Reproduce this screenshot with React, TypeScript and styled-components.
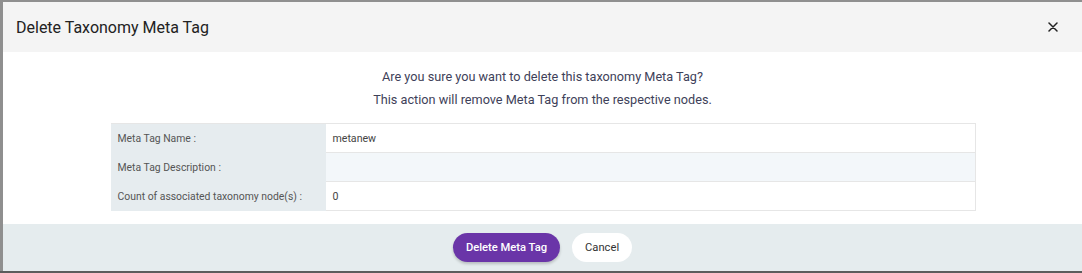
import React from "react";
import styled, { createGlobalStyle } from "styled-components";

const Global = createGlobalStyle`
  html, body { margin: 0; padding: 0; overflow: hidden; }
  body { background: #8f8f8f; font-family: Roboto, "Noto Sans", Arial, sans-serif; }
`;

const Backdrop = styled.div`
  width: 100vw;
  height: 100vh;
  padding: 2px 0 2px 3px;
  box-sizing: border-box;
  background: #8f8f8f;
  display: flex;
  flex-direction: column;
  position: relative;
  &::after {
    content: "";
    position: absolute;
    left: 0; right: 0; bottom: 0; height: 2px;
    background: #5c5c5c;
  }
`;

const Modal = styled.div`
  flex: 1;
  display: flex;
  flex-direction: column;
  background: #fff;
`;

const Header = styled.div`
  height: 50px;
  background: #f4f4f4;
  display: flex;
  align-items: center;
  justify-content: space-between;
  padding: 0 22px 0 13px;
`;

const Title = styled.h2`
  margin: 0;
  font-size: 16px;
  font-weight: 400;
  color: #222;
`;

const Close = styled.button`
  border: 0;
  background: none;
  padding: 0;
  width: 14px;
  height: 14px;
  display: flex;
  align-items: center;
  justify-content: center;
  cursor: pointer;
`;

const Body = styled.div`
  flex: 1;
  display: flex;
  flex-direction: column;
  align-items: center;
  padding-top: 13px;
`;

const Message = styled.p`
  margin: 0;
  font-size: 12.7px;
  line-height: 23px;
  color: #3e4159;
  text-align: center;
`;

const Table = styled.div`
  margin-top: 12px;
  margin-left: 1px;
  width: 864px;
  display: grid;
  grid-template-columns: 215px 1fr;
  border-top: 1px solid #e6e6e6;
  border-right: 1px solid #e6e6e6;
`;

const Label = styled.div`
  background: #e6ecef;
  height: 28px;
  display: flex;
  align-items: center;
  padding-left: 7px;
  font-size: 10.4px;
  color: #555;
  border-bottom: 1px solid #e6ecef;
`;

const Value = styled.div<{ $alt?: boolean }>`
  background: ${(p) => (p.$alt ? "#f3f7fa" : "#fff")};
  height: 28px;
  display: flex;
  align-items: center;
  padding-left: 7px;
  font-size: 10.6px;
  color: #444;
  border-bottom: 1px solid #e6e6e6;
`;

const Footer = styled.div`
  height: 47px;
  background: #e5ecee;
  display: flex;
  align-items: center;
  justify-content: center;
  gap: 12px;
`;

const Button = styled.button<{ $primary?: boolean }>`
  height: 29px;
  border: 0;
  border-radius: 15px;
  padding: 0 13px;
  font-family: Roboto, Arial, sans-serif;
  font-size: 11.2px;
  font-weight: ${(p) => (p.$primary ? 500 : 400)};
  background: ${(p) => (p.$primary ? "#6a35a8" : "#fff")};
  color: ${(p) => (p.$primary ? "#fff" : "#333")};
  box-shadow: ${(p) => (p.$primary ? "0 2px 3px rgba(0,0,0,0.2)" : "none")};
  cursor: pointer;
`;

const rows = [
  { label: "Meta Tag Name :", value: "metanew" },
  { label: "Meta Tag Description :", value: "" },
  { label: "Count of associated taxonomy node(s) :", value: "0" },
];

export default function App() {
  return (
    <>
      <Global />
      <Backdrop>
        <Modal>
          <Header>
            <Title>Delete Taxonomy Meta Tag</Title>
            <Close aria-label="Close">
              <svg width="10" height="10" viewBox="0 0 10 10">
                <path d="M1 1L9 9M9 1L1 9" stroke="#222" strokeWidth="1.5" strokeLinecap="round" />
              </svg>
            </Close>
          </Header>
          <Body>
            <Message>Are you sure you want to delete this taxonomy Meta Tag?</Message>
            <Message>This action will remove Meta Tag from the respective nodes.</Message>
            <Table>
              {rows.map((r, i) => (
                <React.Fragment key={i}>
                  <Label>{r.label}</Label>
                  <Value $alt={i === 1}>{r.value}</Value>
                </React.Fragment>
              ))}
            </Table>
          </Body>
          <Footer>
            <Button $primary>Delete Meta Tag</Button>
            <Button>Cancel</Button>
          </Footer>
        </Modal>
      </Backdrop>
    </>
  );
}
